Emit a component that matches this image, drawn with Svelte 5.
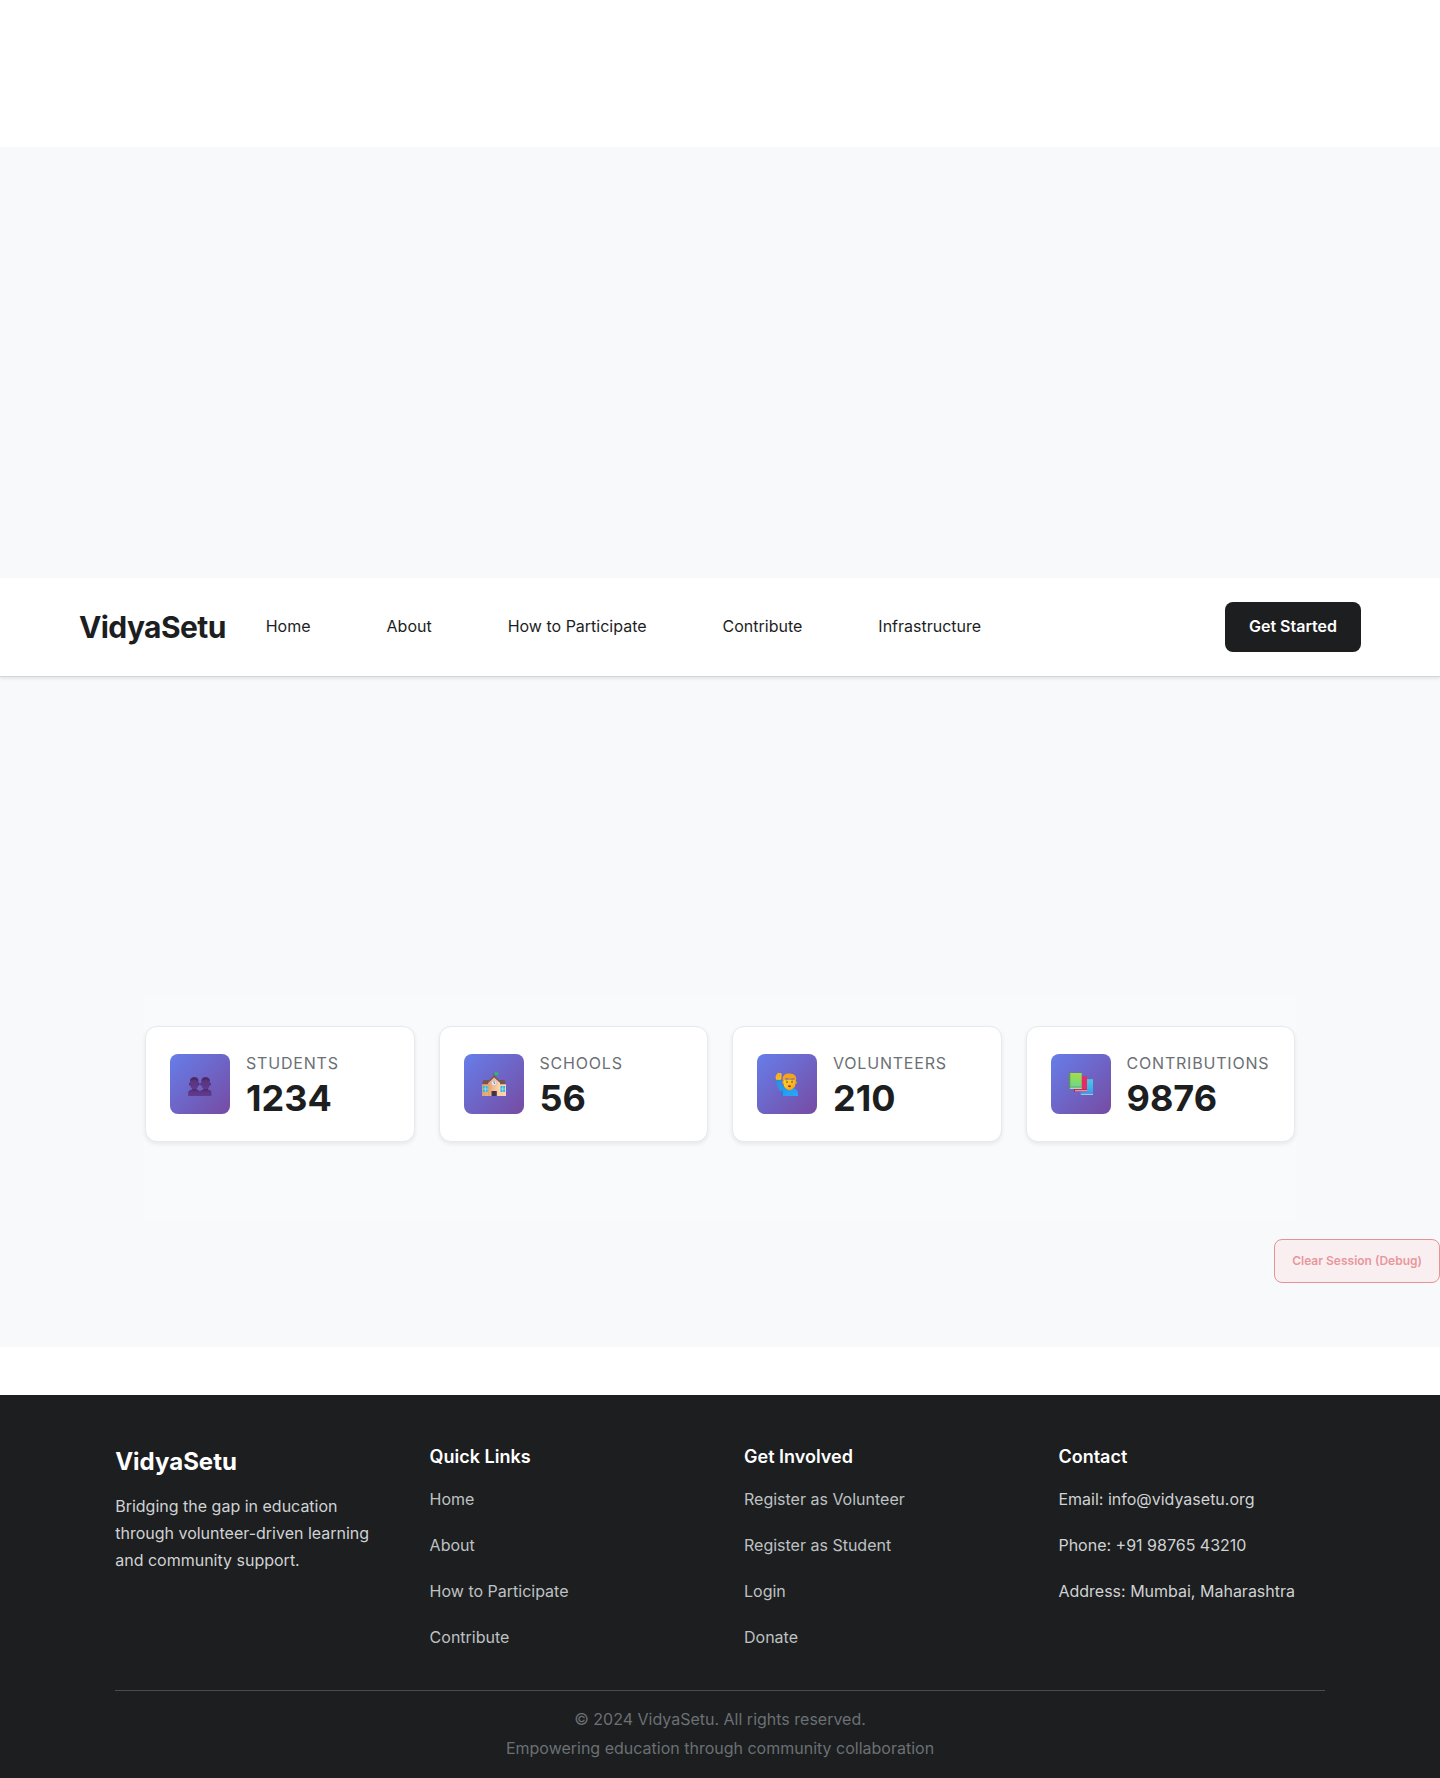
<script>
  const navLinks = ['Home', 'About', 'How to Participate', 'Contribute', 'Infrastructure'];
  const stats = [
    { icon: 'people', label: 'Students', value: '1234' },
    { icon: 'school', label: 'Schools', value: '56' },
    { icon: 'volunteer', label: 'Volunteers', value: '210' },
    { icon: 'books', label: 'Contributions', value: '9876' }
  ];
  const quickLinks = ['Home', 'About', 'How to Participate', 'Contribute'];
  const involved = ['Register as Volunteer', 'Register as Student', 'Login', 'Donate'];
  const contact = ['Email: info@vidyasetu.org', 'Phone: +91 98765 43210', 'Address: Mumbai, Maharashtra'];
</script>

<svelte:head><title>VidyaSetu</title></svelte:head>

<div class="page">
  <div class="banner"></div>
  <section class="hero"></section>

  <header class="navbar">
    <a class="logo" href="#top">VidyaSetu</a>
    <nav class="links" aria-label="Main">
      {#each navLinks as link}
        <a href="#{link.toLowerCase().replaceAll(' ', '-')}">{link}</a>
      {/each}
    </nav>
    <button class="cta" type="button">Get Started</button>
  </header>

  <main>
    <section class="stats">
      {#each stats as stat}
        <article class="card">
          <div class="icon">
            <svg viewBox="0 0 24 24" width="24" height="24" aria-hidden="true">
              {#if stat.icon === 'people'}
                <defs>
                  <linearGradient id="bust" x1="0" y1="0" x2="0" y2="1">
                    <stop offset="0" stop-color="#533274" />
                    <stop offset="1" stop-color="#643a91" />
                  </linearGradient>
                </defs>
                {#each [0, 11.3] as x}
                  <g transform="translate({x} 0)">
                    <path d="M.2 24v-3.2c0-1.8 1.5-2.7 3.4-3l1.3-1.2h3l1.3 1.2c1.9.3 3 1.2 3 3V24z" fill="url(#bust)" />
                    <path d="M4.2 16.2h4.4c.1 1.4-.7 2.2-2.2 2.2s-2.3-.8-2.2-2.2z" fill="#432760" />
                    <ellipse cx="2" cy="12" rx="1" ry="1.5" fill="#4c2b6d" />
                    <ellipse cx="10.6" cy="12" rx="1" ry="1.5" fill="#4c2b6d" />
                    <path d="M2.2 9.2C2.2 6.6 3.5 5.2 6.3 5.2s4.1 1.4 4.1 4v3.3c0 2.9-1.5 4.9-4.1 4.9s-4.1-2-4.1-4.9z" fill="url(#bust)" />
                    <path d="M2.2 9.2C2.2 6.6 3.5 5.2 6.3 5.2s4.1 1.4 4.1 4c-1.5-1.5-6.7-1.5-8.2 0z" fill="#4a2a6b" />
                  </g>
                {/each}
              {:else if stat.icon === 'school'}
                <defs>
                  <linearGradient id="wall" x1="0" x2="1">
                    <stop offset="0" stop-color="#dfa070" />
                    <stop offset=".5" stop-color="#f3bf91" />
                    <stop offset="1" stop-color="#ffd8b0" />
                  </linearGradient>
                </defs>
                <path d="M12.2 5V.3" stroke="#635965" stroke-width=".8" />
                <path d="M12.5.3c1.6-.7 2.4.8 4.2.1l-.7 2.8c-1.4.6-2-.5-3.5 0z" fill="#31b66a" />
                <path d="M0 12h24v12H0z" fill="url(#wall)" />
                <path d="M1.3 8h21.4L24 12.3H0z" fill="#795256" />
                <path d="M6 9.5 12.1 4l6 5.5V24H6z" fill="url(#wall)" />
                <path d="m5 11.1 7.1-6.7 7.1 6.7" fill="none" stroke="#76504e" stroke-width="1.4" />
                <circle cx="12.1" cy="11" r="2.7" fill="#eee9f0" stroke="#b59a9a" stroke-width=".4" />
                <path d="M12.1 9.2V11l1 1" fill="none" stroke="#4b4350" stroke-width=".7" />
                <path d="M1 14h4.6v6H1zM18.5 14h4.6v6h-4.6z" fill="#29b9e8" />
                <path d="M3.3 14v6M1 17h4.6M20.8 14v6M18.5 17h4.6" stroke="#d5e7ea" stroke-width=".6" />
                <path d="M9.5 19h5.3v5H9.5z" fill="#4a3450" />
                <path d="M12.1 19v5" stroke="#30233a" stroke-width=".5" />
              {:else if stat.icon === 'volunteer'}
                <defs>
                  <linearGradient id="shirt" x1="0" x2="1" y1="0" y2="1">
                    <stop offset="0" stop-color="#298edb" />
                    <stop offset="1" stop-color="#27a7ff" />
                  </linearGradient>
                  <linearGradient id="face" x1="0" x2="1" y1="0" y2="1">
                    <stop offset="0" stop-color="#ffd52e" />
                    <stop offset="1" stop-color="#f5a313" />
                  </linearGradient>
                </defs>
                <path d="M1.3 7.4h4.9c-.3 3.4 1 6.5 4.4 8.9h6.9c3.5 0 5.5 2.4 5.5 6.3V24H7.2v-3.8C2.7 17.2.8 12.7 1.3 7.4z" fill="url(#shirt)" />
                <path d="M7.2 18.5V24" stroke="#176fc4" stroke-width=".7" />
                <path d="M1.2 7.7C0 5.3.7 2.8 2.4 1.4 3.5.3 4.3.8 4.7 1.3c1-.7 2-.1 1.9 1.2v2.8c0 1.4-.7 2.2-1 2.6z" fill="#f8b91f" />
                <path d="M2.4 2.1v3M4.5 1.6v3.3" stroke="#d98d20" stroke-width=".4" />
                <path d="M11.6 15h5.8v2c-1.2 1.8-4.6 1.8-5.8 0z" fill="#e19416" />
                <circle cx="8.3" cy="10.4" r="1.2" fill="#e79f1c" />
                <circle cx="20.7" cy="10.4" r="1.2" fill="#e79f1c" />
                <path d="M8.5 7.5h12v4c0 3.6-2.4 6-6 6s-6-2.4-6-6z" fill="url(#face)" />
                <path d="M7.8 9C7 4.1 9.4 1.5 14.2 1.5c5.1 0 7.9 2.7 6.8 7.5-1-.4-1.4-1.4-1.6-2.7-3.2.8-6.5.6-8.5-.5C10.5 7.7 9.2 8.8 7.8 9z" fill="#f6a51b" />
                <circle cx="12" cy="10" r=".8" fill="#553247" />
                <circle cx="17" cy="10" r=".8" fill="#553247" />
                <path d="m10.8 8.2 1.8-.5M16.4 7.7l1.7.5" stroke="#a65a17" stroke-width=".6" />
                <ellipse cx="14.5" cy="14.3" rx="1.4" ry="1" fill="#8b3425" />
              {:else}
                <defs>
                  <linearGradient id="green" x1="0" x2="0" y1="0" y2="1">
                    <stop offset="0" stop-color="#a6dd42" />
                    <stop offset="1" stop-color="#62d798" />
                  </linearGradient>
                  <linearGradient id="blue" x1="0" x2="0" y1="0" y2="1">
                    <stop offset="0" stop-color="#4cc8e9" />
                    <stop offset="1" stop-color="#349eea" />
                  </linearGradient>
                </defs>
                <path d="M11.5 7.2H24V23H11.5z" fill="url(#blue)" />
                <path d="M12 20.9h12v.8H12z" fill="#2474b8" />
                <path d="M12.2 21.7H24v1H12.2z" fill="#ccd3ed" />
                <path d="M5 4.2h13v15.5H5z" fill="#e62c64" />
                <path d="M5 17.6h13v.8H5z" fill="#931c55" />
                <path d="M5.8 18.2H18v1H5.8z" fill="#d3bbcc" />
                <path d="M5 4.2h1v15.5H5z" fill="#b5214d" />
                <path d="M0 1h12.7v16H0z" fill="url(#green)" />
                <path d="M0 1h1.3v16H0z" fill="#549d40" />
                <path d="M.5 14.8h12.2v.8H.5z" fill="#31813f" />
                <path d="M.9 15.6h11.8v1H.9z" fill="#d0ddd0" />
              {/if}
            </svg>
          </div>
          <div class="figures">
            <span class="label">{stat.label}</span>
            <strong class="value">{stat.value}</strong>
          </div>
        </article>
      {/each}
    </section>
    <button class="debug" type="button">Clear Session (Debug)</button>
  </main>

  <footer>
    <div class="columns">
      <div class="brand">
        <h2>VidyaSetu</h2>
        <p>Bridging the gap in education through volunteer-driven learning and community support.</p>
      </div>
      <div>
        <h3>Quick Links</h3>
        <ul>
          {#each quickLinks as link}<li><a href="#{link.toLowerCase().replaceAll(' ', '-')}">{link}</a></li>{/each}
        </ul>
      </div>
      <div>
        <h3>Get Involved</h3>
        <ul>
          {#each involved as link}<li><a href="#{link.toLowerCase().replaceAll(' ', '-')}">{link}</a></li>{/each}
        </ul>
      </div>
      <div>
        <h3>Contact</h3>
        <ul class="contact">
          {#each contact as line}<li>{line}</li>{/each}
        </ul>
      </div>
    </div>
    <div class="legal">
      <p>© 2024 VidyaSetu. All rights reserved.</p>
      <p>Empowering education through community collaboration</p>
    </div>
  </footer>
</div>

<style>
  :global(body) {
    margin: 0;
    background: #fff;
  }
  .page {
    font-family: Inter, 'Liberation Sans', sans-serif;
    font-size: 16px;
    color: #1c1e1f;
  }
  .page :global(*) {
    box-sizing: border-box;
  }
  a {
    color: inherit;
    text-decoration: none;
  }
  button {
    font-family: inherit;
    cursor: pointer;
  }
  h2, h3, p, ul {
    margin: 0;
    padding: 0;
  }
  ul {
    list-style: none;
  }
  .banner {
    height: 147px;
  }
  .hero {
    min-height: 431px;
    background: #f8f9fb;
  }
  .navbar {
    position: relative;
    display: flex;
    align-items: center;
    padding: 24px 79px;
    background: #fff;
    border-bottom: 1px solid #cfd6e0;
    box-shadow: 0 2px 3px rgba(0, 0, 0, 0.08);
  }
  .logo {
    margin-right: 40px;
    font-size: 30px;
    font-weight: 700;
    letter-spacing: -0.02em;
  }
  .links {
    display: flex;
    flex: 1;
    gap: 76px;
    padding-bottom: 2px;
  }
  .cta {
    height: 50px;
    padding: 0 24px 2px;
    border: 0;
    border-radius: 8px;
    background: #1c1e1f;
    color: #fff;
    font-size: 16px;
    font-weight: 600;
  }
  main {
    display: flex;
    flex-direction: column;
    padding: 317px 0 64px;
    background: #f8f9fb;
  }
  .stats {
    display: grid;
    grid-template-columns: repeat(4, 1fr);
    gap: 24px;
    width: 80%;
    margin: 0 auto;
    padding: 32px 1px 80px;
    background: #f9fafc;
  }
  .card {
    display: flex;
    align-items: center;
    gap: 16px;
    padding: 24px;
    border: 1px solid #e6e9ed;
    border-radius: 12px;
    background: #fff;
    box-shadow: 0 2px 4px rgba(0, 0, 0, 0.08);
  }
  .icon {
    display: grid;
    flex: none;
    place-items: center;
    width: 60px;
    height: 60px;
    border-radius: 8px;
    background: linear-gradient(135deg, #667eea, #764ba2);
  }
  .figures {
    display: flex;
    flex-direction: column;
    gap: 4px;
  }
  .label {
    color: #6b7075;
    line-height: 24px;
    letter-spacing: 0.05em;
    text-transform: uppercase;
  }
  .value {
    font-size: 36px;
    font-weight: 700;
    line-height: 38px;
  }
  .debug {
    align-self: flex-end;
    height: 44px;
    margin-top: 17px;
    padding: 0 17px 2px;
    border: 1px solid #d32f2f;
    border-radius: 8px;
    background: #fbe4e6;
    color: #d9363e;
    font-size: 12px;
    font-weight: 600;
    opacity: 0.5;
  }
  footer {
    margin-top: 48px;
    padding: 48px 8% 16px;
    background: #1c1e1f;
    color: #d0d2d4;
  }
  .columns {
    display: grid;
    grid-template-columns: repeat(4, 1fr);
    gap: 48px;
  }
  .brand h2 {
    margin-bottom: 12px;
    color: #fff;
    font-size: 24px;
    font-weight: 700;
    line-height: 38px;
  }
  .brand p {
    line-height: 27px;
  }
  h3 {
    margin-bottom: 15px;
    color: #fff;
    font-size: 18px;
    font-weight: 600;
    line-height: 28px;
  }
  li {
    line-height: 26px;
  }
  li + li {
    margin-top: 20px;
  }
  li a {
    color: #bfc1c3;
  }
  .contact {
    white-space: nowrap;
  }
  .legal {
    margin-top: 40px;
    padding-top: 14px;
    border-top: 1px solid #4a4c4e;
    color: #6b7075;
    text-align: center;
    line-height: 29px;
  }
</style>
